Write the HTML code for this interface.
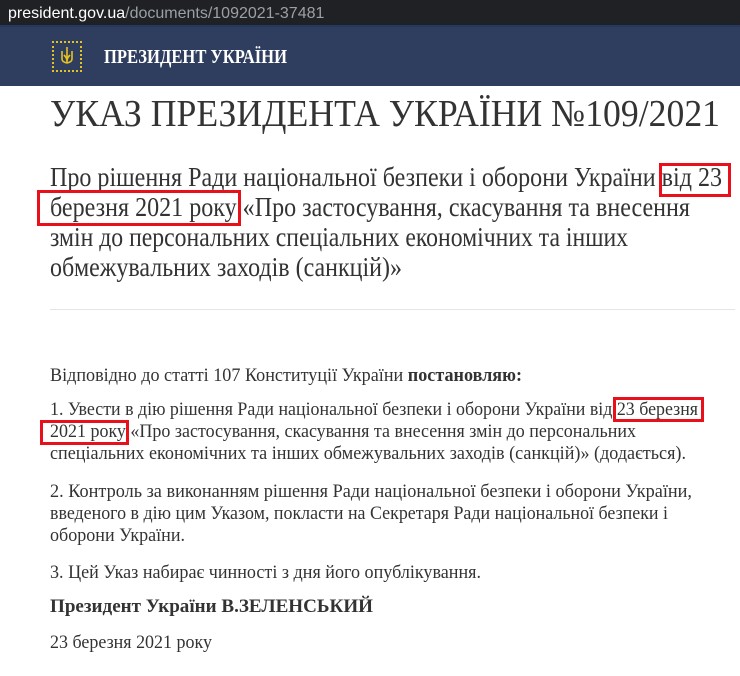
<!DOCTYPE html>
<html><head><meta charset="utf-8"><style>
body{margin:0;width:740px;height:676px;background:#fff;overflow:hidden;position:relative;font-family:"Liberation Serif",serif}
.top{position:absolute;left:0;top:0;width:740px;height:25px;background:#202124}
.band{position:absolute;left:0;top:25px;width:740px;height:59px;background:#2f3e5e;border-top:2px solid #22385e}
.emb{position:absolute;left:52px;top:41px;width:26px;height:27px;border:2px dotted #e6c21f}
svg.t{position:absolute;left:0;top:0}
.box{position:absolute;border:3px solid #e8101a;box-sizing:border-box}
</style></head><body>
<div class="top"></div><div class="band"></div>
<div class="emb"><svg width="26" height="27" viewBox="0 0 26 27"><path d="M13 4v16M8 8v8q0 3 5 4q5-1 5-4V8M10 12q3 3 3 6q0-3 3-6" fill="none" stroke="#e6c21f" stroke-width="1.6"/></svg></div>
<svg class="t" width="740" height="676" font-family="Liberation Serif, serif">
<text x="8" y="18" font-family="Liberation Sans, sans-serif" font-size="16" fill="#fff">president.gov.ua<tspan fill="#9aa0a6">/documents/1092021-37481</tspan></text>
<text x="104" y="63" font-size="20" font-weight="bold" fill="#fff" textLength="183" lengthAdjust="spacingAndGlyphs">ПРЕЗИДЕНТ УКРАЇНИ</text>
<g fill="#333">
<text x="50" y="126" font-size="38" textLength="670" lengthAdjust="spacingAndGlyphs">УКАЗ ПРЕЗИДЕНТА УКРАЇНИ №109/2021</text>
<g font-size="27">
<text x="50" y="186" textLength="672" lengthAdjust="spacingAndGlyphs">Про рішення Ради національної безпеки і оборони України від 23</text>
<text x="50" y="216" textLength="640" lengthAdjust="spacingAndGlyphs">березня 2021 року «Про застосування, скасування та внесення</text>
<text x="50" y="246" textLength="578" lengthAdjust="spacingAndGlyphs">змін до персональних спеціальних економічних та інших</text>
<text x="50" y="276" textLength="352" lengthAdjust="spacingAndGlyphs">обмежувальних заходів (санкцій)»</text>
</g>
<rect x="50" y="309" width="685" height="1" fill="#e5e5e5"/>
<g font-size="18.5">
<text x="50" y="381" textLength="472" lengthAdjust="spacingAndGlyphs">Відповідно до статті 107 Конституції України <tspan font-weight="bold">постановляю:</tspan></text>
<text x="50" y="415" textLength="648" lengthAdjust="spacingAndGlyphs">1. Увести в дію рішення Ради національної безпеки і оборони України від 23 березня</text>
<text x="50" y="437" textLength="586" lengthAdjust="spacingAndGlyphs">2021 року «Про застосування, скасування та внесення змін до персональних</text>
<text x="50" y="459" textLength="636" lengthAdjust="spacingAndGlyphs">спеціальних економічних та інших обмежувальних заходів (санкцій)» (додається).</text>
<text x="50" y="497" textLength="642" lengthAdjust="spacingAndGlyphs">2. Контроль за виконанням рішення Ради національної безпеки і оборони України,</text>
<text x="50" y="519" textLength="618" lengthAdjust="spacingAndGlyphs">введеного в дію цим Указом, покласти на Секретаря Ради національної безпеки і</text>
<text x="50" y="541" textLength="135" lengthAdjust="spacingAndGlyphs">оборони України.</text>
<text x="50" y="578" textLength="431" lengthAdjust="spacingAndGlyphs">3. Цей Указ набирає чинності з дня його опублікування.</text>
<text x="50" y="612" font-weight="bold" textLength="323" lengthAdjust="spacingAndGlyphs">Президент України В.ЗЕЛЕНСЬКИЙ</text>
<text x="50" y="648" textLength="162" lengthAdjust="spacingAndGlyphs">23 березня 2021 року</text>
</g></g></svg>
<div class="box" style="left:659px;top:163px;width:72px;height:34px"></div>
<div class="box" style="left:37px;top:190px;width:204px;height:36px"></div>
<div class="box" style="left:613px;top:397px;width:91px;height:25px"></div>
<div class="box" style="left:40px;top:420px;width:89px;height:25px"></div>
</body></html>
